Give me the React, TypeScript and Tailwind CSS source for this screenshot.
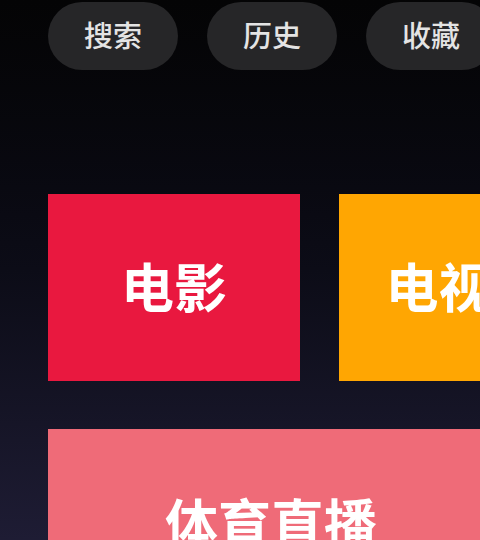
const pills = ["搜索", "历史", "收藏"];

const tiles = [
  { title: "电影", color: "bg-[#e9183f]" },
  { title: "电视剧", color: "bg-[#ffa602]" },
];

export default function App() {
  return (
    <div
      className="h-[540px] w-[480px] overflow-hidden bg-gradient-to-b from-[#040405] via-[#0c0c17] to-[#1e1c34] pl-12"
      style={{ fontFamily: '"Noto Sans", "Noto Sans CJK SC", sans-serif' }}
    >
      <div className="flex gap-[29px] pt-[2px]">
        {pills.map((p) => (
          <div
            key={p}
            className="flex h-[68px] w-[130px] shrink-0 items-center justify-center rounded-full bg-[#262628] text-[29px] font-medium text-[#e4e4e4]"
          >
            {p}
          </div>
        ))}
      </div>

      <div className="mt-[124px] flex gap-[39px]">
        {tiles.map((t) => (
          <div
            key={t.title}
            className={`flex h-[187px] w-[252px] shrink-0 items-center justify-center ${t.color} text-[53px] font-bold text-white`}
          >
            {t.title}
          </div>
        ))}
      </div>

      <div className="mt-[48px] flex h-[190px] w-[446px] items-center justify-center bg-[#ef6b78] text-[53px] font-bold text-white">
        体育直播
      </div>
    </div>
  );
}
